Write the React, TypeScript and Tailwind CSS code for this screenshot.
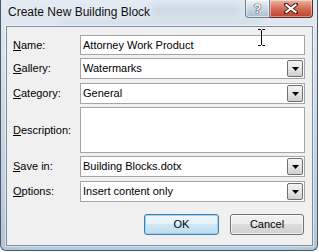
import React from "react";

const font = "font-['Liberation_Sans',Arial,sans-serif]";

function Label({ text, k }: { text: string; k: number }) {
  return (
    <div className="w-[73px] shrink-0 pl-[6px] text-[11px] text-black">
      {text.slice(0, k)}
      <span className="underline underline-offset-[1px]">{text.slice(k, k + 1)}</span>
      {text.slice(k + 1)}
    </div>
  );
}

function DropButton() {
  return (
    <div className="w-[16px] my-[1px] mr-[1px] border border-[#707070] rounded-[2px] bg-gradient-to-b from-[#f4f4f4] via-[#e6e6e6] to-[#cfcfcf] flex items-center justify-center">
      <svg width="7" height="4" viewBox="0 0 7 4">
        <path d="M0 0H7L3.5 4Z" fill="#000" />
      </svg>
    </div>
  );
}

function Select({ value }: { value: string }) {
  return (
    <div className="flex w-[225px] h-[21px] border border-[#a5a5a5] bg-white">
      <div className="flex-1 flex items-center pl-[2px] text-[11px] text-black">{value}</div>
      <DropButton />
    </div>
  );
}

export default function App() {
  return (
    <div className={`w-[319px] h-[252px] bg-white ${font}`}>
      <div className="relative w-[318px] h-[251px] border border-t-0 border-[#4a5a6b] rounded-b-[6px] overflow-hidden bg-gradient-to-b from-[#e3ebf3] via-[#c9d8e6] to-[#b3c6d8]">
        <div className="absolute left-[150px] top-[4px] w-[90px] h-[12px] bg-[#9fb0c0] opacity-30 blur-[4px]" />
        <div className="absolute left-[60px] top-[20px] w-[200px] h-[6px] bg-[#9fb0c0] opacity-20 blur-[3px]" />
        {/* title bar */}
        <div className="relative flex items-start h-[26px] pl-[7px] pr-[4px]">
          <div className="pt-[5px] text-[12px] leading-[14px] text-[#111]">Create New Building Block</div>
          <div className="ml-auto flex">
            <div className="w-[25px] h-[18px] border border-t-0 border-[#6d7d8d] rounded-bl-[4px] bg-gradient-to-b from-[#eef3f8] via-[#cdd8e3] to-[#aebdcc] flex items-center justify-center shadow-[inset_0_0_0_1px_rgba(255,255,255,0.6)]">
              <span className="text-[13px] font-bold leading-none text-white [text-shadow:0_0_1px_#2d3b4a,0_0_1px_#2d3b4a,0_0_1px_#2d3b4a]">?</span>
            </div>
            <div className="w-[43px] h-[18px] border border-l-0 border-t-0 border-[#5b2b22] rounded-br-[4px] bg-gradient-to-b from-[#eab3a3] via-[#d36d57] to-[#c0402a] flex items-center justify-center shadow-[inset_0_0_0_1px_rgba(255,255,255,0.45)]">
              <svg width="14" height="11" viewBox="0 0 14 11">
                <path d="M2 1.5L12 9.5M12 1.5L2 9.5" stroke="#4a1f18" strokeWidth="4" strokeLinecap="square" />
                <path d="M2.5 2L11.5 9M11.5 2L2.5 9" stroke="#fff" strokeWidth="2.2" strokeLinecap="square" />
              </svg>
            </div>
          </div>
        </div>
        {/* client area */}
        <div className="relative ml-[5px] w-[307px] h-[220px] border border-[#7e8fa0] bg-[#f0f0f0] shadow-[0_0_0_1px_rgba(255,255,255,0.5)]">
          <div className="flex flex-col pt-[8px]">
            <div className="flex items-center h-[20px]">
              <Label text="Name:" k={0} />
              <div className="w-[225px] h-[20px] border border-[#a5a5a5] bg-white flex items-center pl-[2px] text-[11px] text-black">
                Attorney Work Product
              </div>
            </div>
            <div className="flex items-center h-[21px] mt-[3px]">
              <Label text="Gallery:" k={0} />
              <Select value="Watermarks" />
            </div>
            <div className="flex items-center h-[21px] mt-[4px]">
              <Label text="Category:" k={0} />
              <Select value="General" />
            </div>
            <div className="flex items-center h-[46px] mt-[3px]">
              <Label text="Description:" k={0} />
              <div className="w-[225px] h-[46px] border border-[#a5a5a5] bg-white" />
            </div>
            <div className="flex items-center h-[21px] mt-[3px]">
              <Label text="Save in:" k={0} />
              <Select value="Building Blocks.dotx" />
            </div>
            <div className="flex items-center h-[21px] mt-[4px]">
              <Label text="Options:" k={0} />
              <Select value="Insert content only" />
            </div>
            <div className="flex justify-end gap-[11px] pr-[8px] mt-[12px]">
              <div className="w-[75px] h-[21px] rounded-[3px] border border-[#3c7fb1] bg-[linear-gradient(#f2f8fc_0%,#e6f2fa_50%,#cfe6f5_50%,#bcdcf0_100%)] shadow-[inset_0_0_0_1px_#9fd4f0] flex items-center justify-center text-[11px] text-black">
                OK
              </div>
              <div className="w-[74px] h-[21px] rounded-[3px] border border-[#707070] bg-[linear-gradient(#f2f2f2_0%,#ebebeb_50%,#dddddd_50%,#cfcfcf_100%)] shadow-[inset_0_0_0_1px_rgba(255,255,255,0.7)] flex items-center justify-center text-[11px] text-black">
                Cancel
              </div>
            </div>
          </div>
        </div>
        <div className="absolute left-[20px] right-[20px] bottom-[1px] h-[1px] bg-[#9fe0f5] opacity-70" />
        <svg className="absolute left-[256px] top-[29px]" width="9" height="17" viewBox="0 0 9 17">
          <path d="M1 0.5H3.5L4.5 1.5L5.5 0.5H8M4.5 1.5V15.5M1 16.5H3.5L4.5 15.5L5.5 16.5H8" stroke="#000" strokeWidth="1" fill="none" />
        </svg>
      </div>
    </div>
  );
}
